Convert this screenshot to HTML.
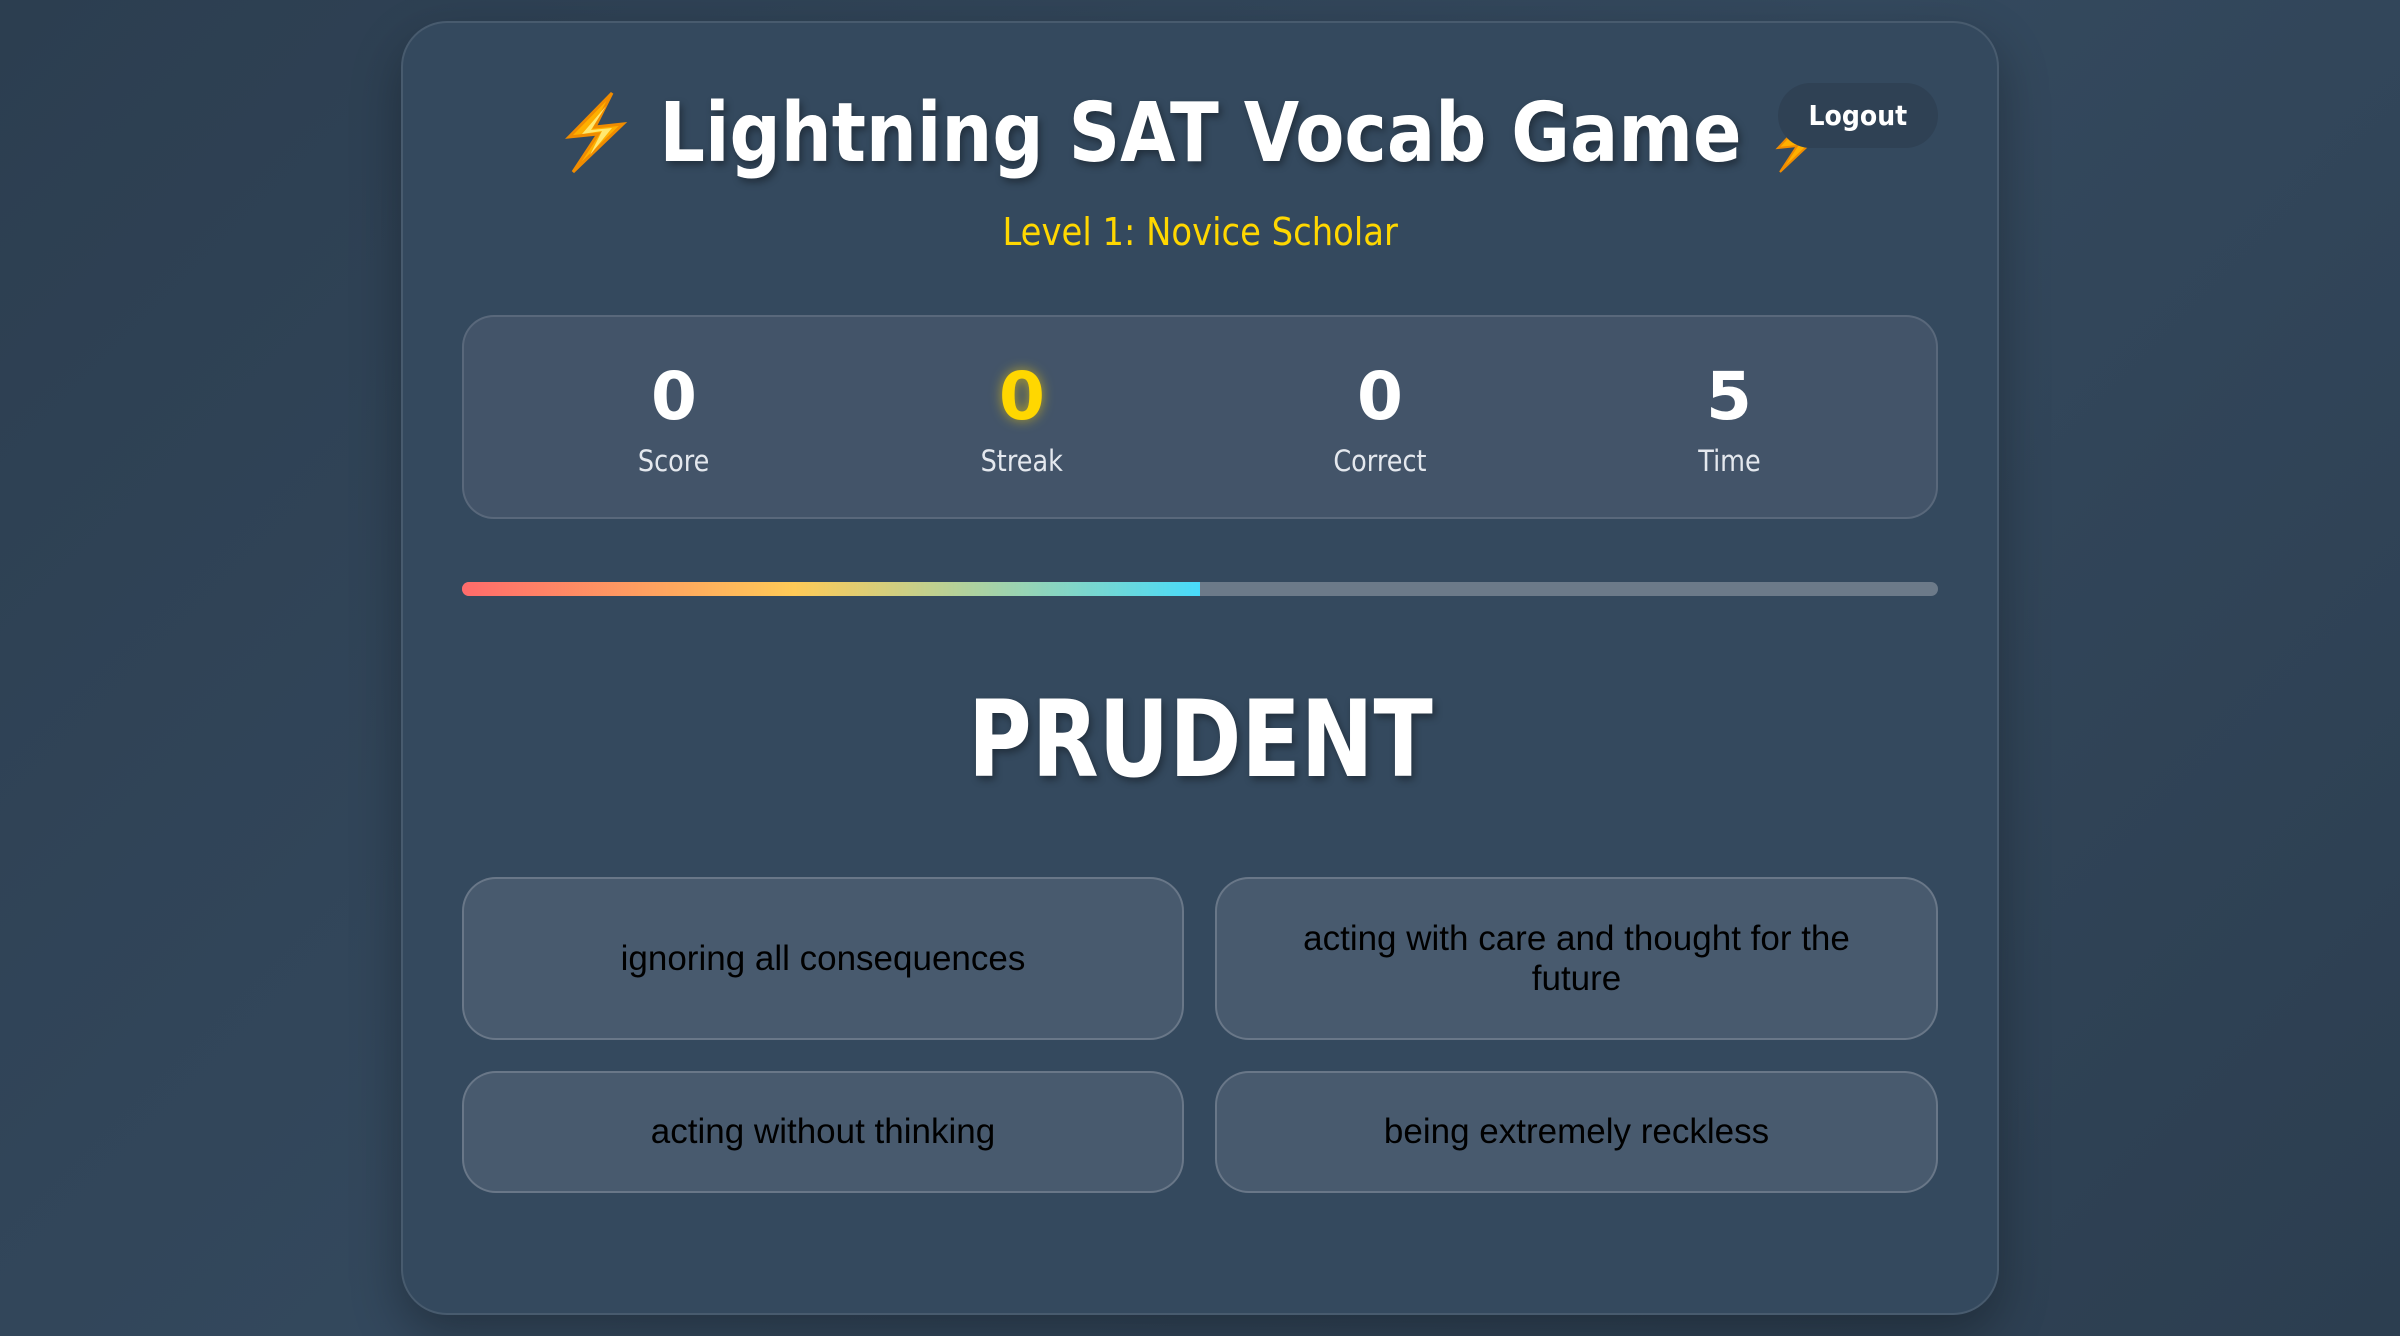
<!DOCTYPE html>
<html><head><meta charset="utf-8"><style>
*{margin:0;padding:0;box-sizing:border-box}
body{width:2400px;height:1336px;background:linear-gradient(135deg,#2c3e50 0%,#34495e 50%,#2c3e50 100%);font-family:"DejaVu Sans","Liberation Sans",sans-serif;position:relative;overflow:hidden}
.card{position:absolute;left:401px;top:21px;width:1598px;height:1294px;border-radius:46px;background:#34495e;border:2px solid rgba(255,255,255,.1);box-shadow:0 20px 50px rgba(0,0,0,.3)}
.abs{position:absolute}
.title{left:0;width:2400px;top:84px;text-align:center;color:#fff;font-weight:bold;font-size:82px;line-height:100px;text-shadow:3px 4px 8px rgba(0,0,0,.35);white-space:nowrap}
.title span{display:inline-block;transform:scaleX(.873)}
.level{left:0;width:2400px;top:208px;text-align:center;color:#ffd700;font-size:38px;line-height:48px}
.level span{display:inline-block;transform:scaleX(.89)}
.logout{left:1778px;top:83px;width:160px;height:65px;border-radius:33px;background:#2f4154;color:#fff;font-weight:bold;font-size:28px;line-height:65px;text-align:center}
.logout span{display:inline-block;transform:scaleX(.9)}
.stats{left:462px;top:315px;width:1476px;height:204px;border-radius:32px;background:#435469;border:2px solid rgba(255,255,255,.12)}
.num{width:300px;text-align:center;color:#fff;font-weight:bold;font-size:66px;line-height:70px;top:362px}
.lab{width:300px;text-align:center;color:#e4e8ee;font-size:29px;line-height:36px;top:443px}
.lab span{display:inline-block;transform:scaleX(.88)}
.bar{left:462px;top:582px;width:1476px;height:14px;border-radius:7px;background:#6c7a89;overflow:hidden}
.fill{width:738px;height:14px;background:linear-gradient(90deg,#ff6b6b,#feca57 45%,#48dbfb)}
.word{left:0;width:2400px;top:670px;text-align:center;color:#fff;font-weight:bold;font-size:106px;line-height:140px;text-shadow:3px 4px 8px rgba(0,0,0,.35)}
.word span{display:inline-block;transform:scaleX(.82)}
.opt{border-radius:34px;background:#485a6e;border:2px solid rgba(255,255,255,.18);display:flex;align-items:center;justify-content:center;text-align:center;font-family:"Liberation Sans",sans-serif;font-size:35px;line-height:40px;color:#000;padding:0 60px}
</style></head><body>
<div class="card"></div>
<svg class="abs" style="left:0;top:0" width="2400" height="300">
<polygon points="612,93 569,137 598,134 573,172 623,124 595,127" fill="#ffb000" stroke="#f08c00" stroke-width="3"/>
<polygon points="606,106 582,134 602,131 590,155 612,128 591,130" fill="#ffe870"/>
<polygon points="1806,118 1778,148 1797,146 1780,172 1814,140 1796,141" fill="#ffb000" stroke="#f08c00" stroke-width="2"/>
</svg>
<div class="abs title"><span>&nbsp;&nbsp;&nbsp;Lightning SAT Vocab Game&nbsp;&nbsp;&nbsp;</span></div>
<div class="abs logout"><span>Logout</span></div>
<div class="abs level"><span>Level 1: Novice Scholar</span></div>
<div class="abs stats"></div>
<div class="abs num" style="left:524px">0</div>
<div class="abs num" style="left:872px;color:#ffd700;text-shadow:0 0 12px rgba(255,215,0,.6)">0</div>
<div class="abs num" style="left:1230px">0</div>
<div class="abs num" style="left:1579px">5</div>
<div class="abs lab" style="left:524px"><span>Score</span></div>
<div class="abs lab" style="left:872px"><span>Streak</span></div>
<div class="abs lab" style="left:1230px"><span>Correct</span></div>
<div class="abs lab" style="left:1579px"><span>Time</span></div>
<div class="abs bar"><div class="fill"></div></div>
<div class="abs word"><span>PRUDENT</span></div>
<div class="abs opt" style="left:462px;top:877px;width:722px;height:163px">ignoring all consequences</div>
<div class="abs opt" style="left:1215px;top:877px;width:723px;height:163px">acting with care and thought for the future</div>
<div class="abs opt" style="left:462px;top:1071px;width:722px;height:122px">acting without thinking</div>
<div class="abs opt" style="left:1215px;top:1071px;width:723px;height:122px">being extremely reckless</div>
</body></html>
